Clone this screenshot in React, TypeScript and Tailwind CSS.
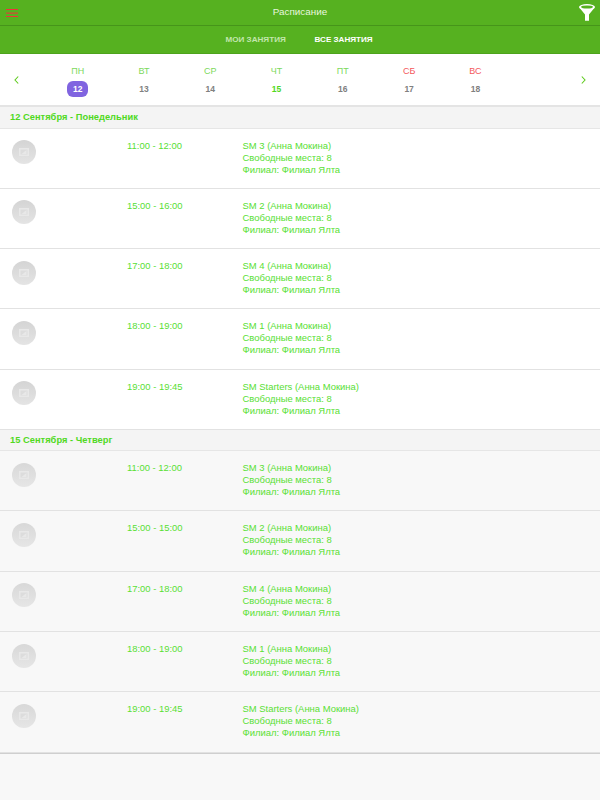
const days = [
  { d: "ПН", n: "12", red: false, active: true },
  { d: "ВТ", n: "13", red: false },
  { d: "СР", n: "14", red: false },
  { d: "ЧТ", n: "15", red: false, today: true },
  { d: "ПТ", n: "16", red: false },
  { d: "СБ", n: "17", red: true },
  { d: "ВС", n: "18", red: true },
];

const first = [
  ["11:00 - 12:00", "SM 3 (Анна Мокина)"],
  ["15:00 - 16:00", "SM 2 (Анна Мокина)"],
  ["17:00 - 18:00", "SM 4 (Анна Мокина)"],
  ["18:00 - 19:00", "SM 1 (Анна Мокина)"],
  ["19:00 - 19:45", "SM Starters (Анна Мокина)"],
];
const second = [
  ["11:00 - 12:00", "SM 3 (Анна Мокина)"],
  ["15:00 - 15:00", "SM 2 (Анна Мокина)"],
  ["17:00 - 18:00", "SM 4 (Анна Мокина)"],
  ["18:00 - 19:00", "SM 1 (Анна Мокина)"],
  ["19:00 - 19:45", "SM Starters (Анна Мокина)"],
];

function Avatar({ muted }: { muted?: boolean }) {
  return (
    <div
      className={`w-6 h-6 rounded-full flex items-center justify-center bg-gradient-to-b ${
        muted ? "from-[#d8d8d8] to-[#e6e6e6]" : "from-[#d4d4d4] to-[#e4e4e4]"
      }`}
    >
      <svg width="10" height="8" viewBox="0 0 10 8">
        <rect x="0" y="0" width="10" height="8" fill="#e8e8e8" />
        <rect x="1.5" y="1.5" width="7" height="5" fill="#dcdcdc" />
        <path d="M2.5 6 L7.5 2 V6 Z" fill="#e8e8e8" />
      </svg>
    </div>
  );
}

function Row({ time, title, muted }: { time: string; title: string; muted?: boolean }) {
  return (
    <div className="h-[60.3px] border-b border-[#e2e2e2] flex pl-3 pt-[11.5px] text-[9.45px] leading-[12px] text-[#58e034]">
      <Avatar muted={muted} />
      <div className="ml-[91px] w-[115.5px] -mt-[0.5px]">{time}</div>
      <div className="-mt-[0.5px]">
        <div>{title}</div>
        <div>Свободные места: 8</div>
        <div>Филиал: Филиал Ялта</div>
      </div>
    </div>
  );
}

function SectionHeader({ children, tall }: { children: string; tall?: boolean }) {
  return (
    <div
      className={`${tall ? "h-[21.6px]" : "h-[21.1px]"} bg-[#f4f4f4] border-b border-[#e6e6e6] pl-[10px] flex items-center text-[9.35px] font-bold text-[#50d91e]`}
    >
      {children}
    </div>
  );
}

export default function App() {
  return (
    <div className="w-[600px] h-[800px] overflow-hidden bg-[#f8f8f8] font-['Liberation_Sans',Arial,sans-serif]">
      <header className="h-[26px] bg-[#56b120] border-b border-[#46951a] flex items-center justify-between pl-[6px] pr-[5px] relative">
        <svg width="12" height="9" viewBox="0 0 12 9" className="mt-[2px]">
          <rect x="0" y="0" width="12" height="1" fill="#f0303c" />
          <rect x="0" y="3.6" width="12" height="1" fill="#f0303c" />
          <rect x="0" y="7" width="12" height="1" fill="#f0303c" />
        </svg>
        <span className="text-[9.9px] text-[#e8f6de] absolute left-0 right-0 text-center">Расписание</span>
        <svg width="16" height="17" viewBox="0 0 16 17" className="mt-[-1px]">
          <ellipse cx="8" cy="3" rx="8" ry="3" fill="#ffffff" />
          <path d="M0.3 3.5 L6 10.5 V16.8 H10 V10.5 L15.7 3.5 Z" fill="#ffffff" />
          <ellipse cx="8" cy="3" rx="6" ry="1.6" fill="#56b120" />
        </svg>
      </header>
      <nav className="h-[28px] bg-[#56b120] border-b border-[#4da31c] flex text-[8.1px] font-bold">
        <div className="ml-[225.5px] w-[89px] leading-[27px] text-[#c2e6ad]">МОИ ЗАНЯТИЯ</div>
        <div className="leading-[27px] text-white">ВСЕ ЗАНЯТИЯ</div>
      </nav>
      <section className="h-[53px] bg-white border-b-2 border-[#e4e4e4] flex items-center relative">
        <svg width="6" height="8" viewBox="0 0 6 8" className="absolute left-[14px] top-[22px]">
          <path d="M4.2 0.5 L1 4 L4.2 7.5" stroke="#5ecb1c" strokeWidth="1.1" fill="none" />
        </svg>
        <div className="flex ml-[44.5px]">
          {days.map((x) => (
            <div key={x.d} className="w-[66.3px] flex flex-col items-center pt-[12px] h-[51px]">
              <div className={`text-[9px] leading-[11px] ${x.red ? "text-[#f4585c]" : "text-[#7cd95c]"}`}>{x.d}</div>
              <div
                className={`mt-[4px] w-[21px] h-[16px] rounded-[6px] flex items-center justify-center text-[8.5px] font-bold ${
                  x.active ? "bg-[#8064e0] text-white" : x.today ? "text-[#50d91e]" : "text-[#808080]"
                }`}
              >
                {x.n}
              </div>
            </div>
          ))}
        </div>
        <svg width="6" height="8" viewBox="0 0 6 8" className="absolute left-[581px] top-[22px]">
          <path d="M0.8 0.5 L4 4 L0.8 7.5" stroke="#5ecb1c" strokeWidth="1.1" fill="none" />
        </svg>
      </section>
      <SectionHeader tall>12 Сентября - Понедельник</SectionHeader>
      <div className="bg-white">
        {first.map(([t, s]) => (
          <Row key={s} time={t} title={s} />
        ))}
      </div>
      <SectionHeader>15 Сентября - Четверг</SectionHeader>
      <div className="bg-[#f8f8f8] border-b border-[#cfcfcf]">
        {second.map(([t, s]) => (
          <Row key={s} time={t} title={s} muted />
        ))}
      </div>
    </div>
  );
}
